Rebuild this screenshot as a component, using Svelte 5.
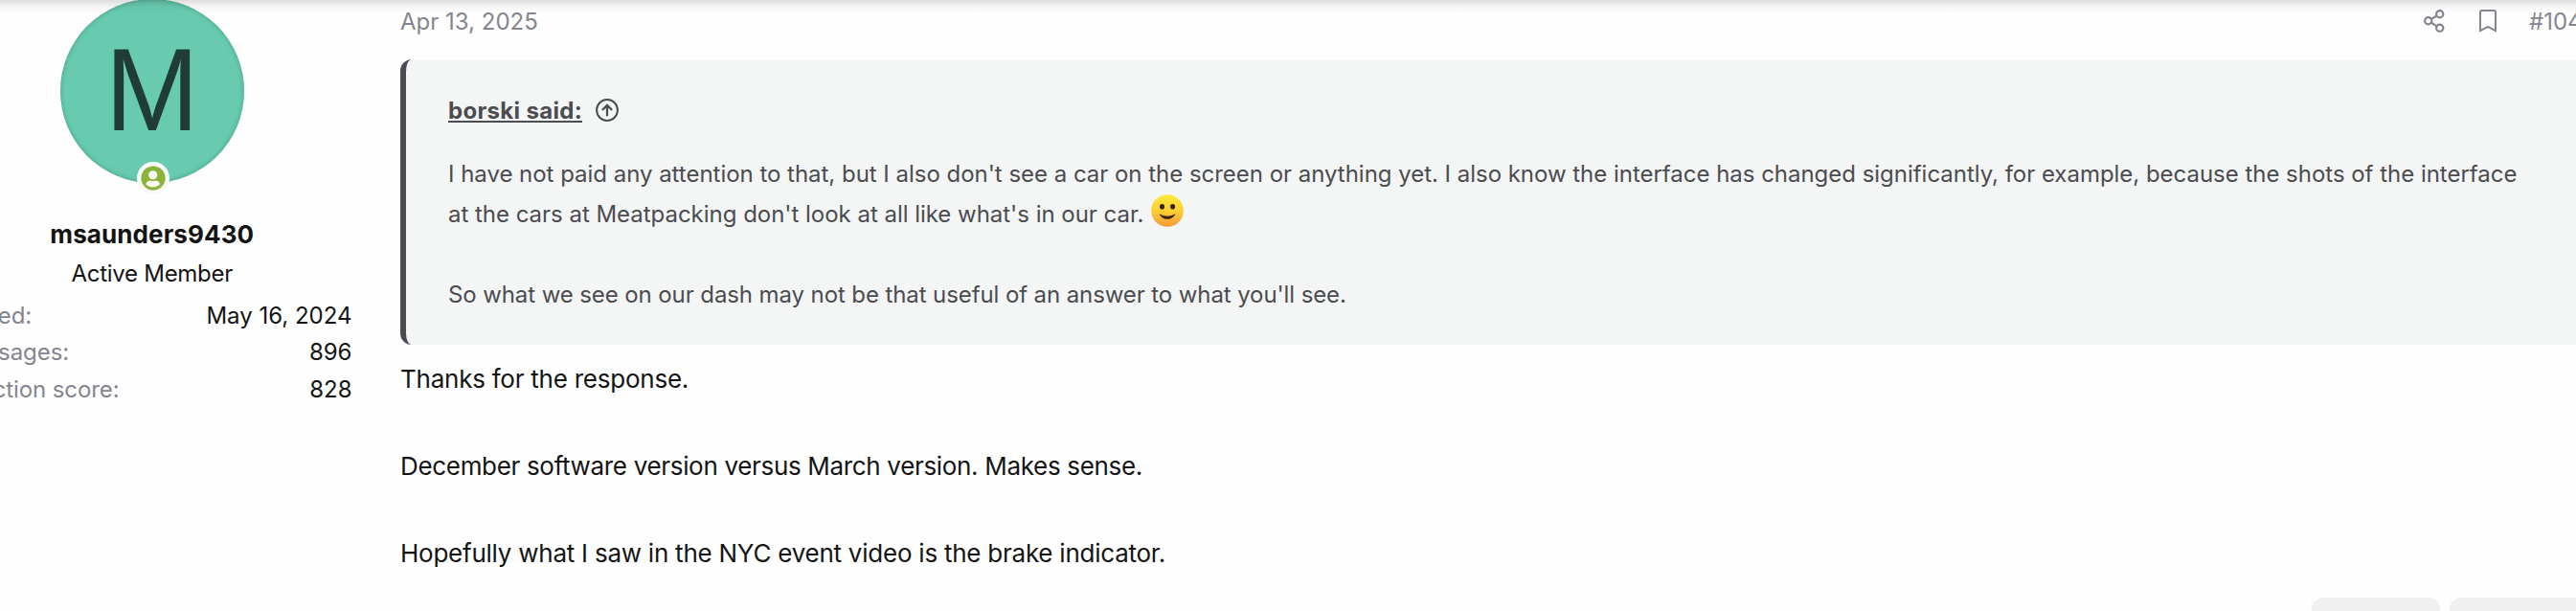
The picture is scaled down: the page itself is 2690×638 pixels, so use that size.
<script>
  const stats = [
    { label: 'Joined:', value: 'May 16, 2024' },
    { label: 'Messages:', value: '896' },
    { label: 'Reaction score:', value: '828' }
  ];
</script>

<div class="page">
  <article class="post">
    <aside class="user">
      <div class="avatar">
        <span class="letter">M</span>
        <svg class="online" width="34" height="34" viewBox="0 0 34 34">
          <circle cx="17" cy="17" r="17" fill="#f8f9f8" />
          <circle cx="17" cy="17" r="12.6" fill="#8bb33a" />
          <circle cx="16.7" cy="13.8" r="4.6" fill="#f8faf5" />
          <path d="M9.2 23.2c.8-2.3 2.9-3.6 4.8-3.6 1 .5 1.8.7 2.7.7s1.7-.2 2.7-.7c1.9 0 4 1.3 4.8 3.6-1.8 2-4.4 3.2-7.500 3.200s-5.700-1.200-7.500-3.200z" fill="#f8faf5" />
        </svg>
      </div>
      <h4>msaunders9430</h4>
      <h5>Active Member</h5>
      <dl>
        {#each stats as s}
          <div class="stat"><dt>{s.label}</dt><dd>{s.value}</dd></div>
        {/each}
      </dl>
    </aside>

    <section class="main">
      <header>
        <time>Apr 13, 2025</time>
        <div class="tools">
          <svg width="22" height="26" viewBox="0 0 22 26" fill="none" stroke="#85858f" stroke-width="2.2">
            <circle cx="16.7" cy="5.7" r="3.6" />
            <circle cx="4.7" cy="12.7" r="3.6" />
            <circle cx="16.7" cy="20.3" r="3.6" />
            <path d="M7.8 10.9l5.8-3.4M7.8 14.5l5.8 3.9" />
          </svg>
          <svg class="mark" width="18" height="26" viewBox="0 0 18 26" fill="none" stroke="#85858f" stroke-width="2">
            <path d="M1 23.200V3.500Q1 2 2.500 2h13Q17 2 17 3.500v19.700l-8-4.300z" />
          </svg>
          <span>#104</span>
        </div>
      </header>

      <blockquote>
        <div class="source">
          <a>borski said:</a>
          <svg width="24" height="24" viewBox="0 0 24 24" fill="none" stroke="#4b4c50" stroke-width="2">
            <circle cx="12" cy="12" r="10.900" />
            <path d="M12 18.200V7M6.900 12L12 6.900l5.100 5.100" stroke-width="2.200" />
          </svg>
        </div>
        <p class="q1">I have not paid any attention to that, but I also don't see a car on the screen or anything yet. I also know the interface has changed significantly, for example, because the shots of the interface</p>
        <p class="q1 inline">
          <span>at the cars at Meatpacking don't look at all like what's in our car.</span>
          <svg width="34" height="34" viewBox="0 0 34 34">
            <defs>
              <linearGradient id="face" x1="0" y1="0" x2="0" y2="1">
                <stop offset="0" stop-color="#ffe93c" />
                <stop offset=".5" stop-color="#fdd036" />
                <stop offset="1" stop-color="#f59a36" />
              </linearGradient>
            </defs>
            <circle cx="17" cy="17" r="16.800" fill="url(#face)" />
            <ellipse cx="11.500" cy="12.800" rx="2.500" ry="2.800" fill="#35200a" />
            <ellipse cx="22.600" cy="12.800" rx="2.500" ry="2.800" fill="#35200a" />
            <path d="M9 20.800Q17 25.300 25 20.800Q22.500 25.600 17 25.600T9 20.800z" fill="#35200a" stroke="#35200a" stroke-width=".5" stroke-linejoin="round" />
          </svg>
        </p>
        <p class="q3">So what we see on our dash may not be that useful of an answer to what you'll see.</p>
      </blockquote>

      <div class="body">
        <p>Thanks for the response.</p>
        <p class="tight">December software version versus March version. Makes sense.</p>
        <p>Hopefully what I saw in the NYC event video is the brake indicator.</p>
      </div>

      <footer>
        <div class="btn"></div>
        <div class="btn wide"></div>
      </footer>
    </section>
  </article>
  <div class="shade"></div>
</div>

<style>
  .page {
    position: relative;
    height: 638px;
    overflow: hidden;
    background: #fefefe;
    font-family: Inter, Roboto, sans-serif;
    font-size: 24px;
    color: #141414;
    white-space: nowrap;
  }
  svg { flex: none; }
  p, h4, h5, dl, dd, blockquote { margin: 0; }
  .post { display: flex; gap: 50.5px; margin-left: -50px; height: 100%; }
  .user { width: 417.5px; flex: none; display: flex; flex-direction: column; align-items: center; }
  .avatar {
    position: relative;
    width: 192px;
    height: 192px;
    margin-top: -1.5px;
    flex: none;
    border-radius: 50%;
    background: #68cbb0;
    box-shadow: inset 0 0 5px rgba(20, 90, 70, .42);
    display: flex;
    justify-content: center;
  }
  .letter {
    font: 122px/140px "Liberation Sans", Arial, sans-serif;
    color: #1f3d35;
    transform: scaleX(.965);
    margin-top: 25px;
  }
  .online { position: absolute; left: 80px; bottom: -12px; }
  h4 { margin-top: 36.5px; font-size: 26px; line-height: 36px; letter-spacing: .1px; font-weight: 700; }
  h5 { margin-top: 5.5px; font-size: 24px; line-height: 34px; font-weight: 400; letter-spacing: -.29px; }
  dl { margin-top: 8px; align-self: stretch; }
  .stat { display: flex; justify-content: space-between; line-height: 38.5px; }
  dt { color: #85858f; letter-spacing: -.08px; }

  .main { flex: 1; min-width: 0; display: flex; flex-direction: column; }
  header {
    box-sizing: border-box;
    height: 62px;
    flex: none;
    padding: 3px 0 0;
    display: flex;
    justify-content: space-between;
    line-height: 40px;
    color: #85858f;
  }
  .tools { display: flex; align-items: center; height: 38px; width: 159px; flex: none; }
  .mark { margin-left: 36px; }
  .tools span { margin-left: 34px; line-height: 38px; padding-top: 1px; }
  blockquote {
    box-sizing: border-box;
    height: 298px;
    flex: none;
    padding: 33px 0 0 44px;
    border-left: 6px solid #4b4a58;
    border-radius: 12px 0 0 12px;
    background: #f4f5f5;
    color: #4b4c50;
    line-height: 42px;
  }
  .source { display: flex; align-items: center; gap: 14px; height: 42px; margin-bottom: 24px; }
  .source svg { margin-top: -2px; }
  .source a {
    font-weight: 700;
    letter-spacing: .32px;
    text-decoration: underline;
    text-decoration-thickness: 2px;
    text-underline-offset: 2px;
    text-decoration-skip-ink: none;
  }
  .q1 { letter-spacing: -.025px; }
  .inline { display: flex; align-items: flex-start; gap: 7.5px; height: 42px; }
  .q3 { margin-top: 42px; letter-spacing: -.1px; }
  .body { margin-top: 13px; font-size: 26px; line-height: 45.5px; letter-spacing: -.24px; display: flex; flex-direction: column; gap: 45.5px; }
  .tight { letter-spacing: -.325px; }
  footer { margin-top: 23.5px; display: flex; justify-content: flex-end; gap: 10px; }
  .btn { width: 134px; height: 60px; border-radius: 12px; background: #f0f0f0; }
  .wide { width: 132px; border-radius: 12px 0 0 12px; }
  .shade {
    position: absolute;
    inset: 0 0 auto 0;
    height: 14px;
    background: linear-gradient(rgba(50, 55, 52, .16), rgba(50, 55, 52, .12) 20%, rgba(50, 55, 52, .04) 55%, rgba(50, 55, 52, 0));
  }
</style>
